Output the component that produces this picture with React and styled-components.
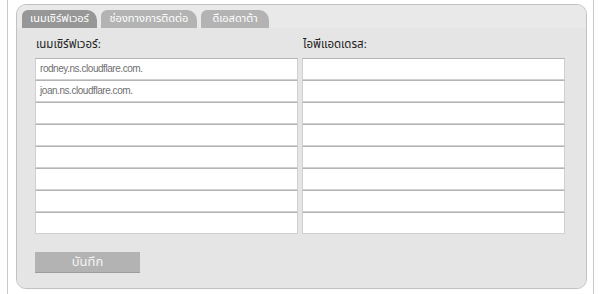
import React from "react";
import styled, { createGlobalStyle } from "styled-components";

const Global = createGlobalStyle`
  html, body { margin: 0; padding: 0; background: #fff; }
  body { font-family: Tahoma, "Noto Sans Thai", "Noto Sans", "DejaVu Sans", sans-serif; }
`;

const Frame = styled.div`
  box-sizing: border-box;
  margin-left: 7px;
  width: 587px;
  height: 294px;
  border-left: 1px solid #c9c9c9;
  border-right: 1px solid #c9c9c9;
  padding: 4px 6px 0 8px;
`;

const Panel = styled.div`
  box-sizing: border-box;
  height: 285px;
  border: 1px solid #c2c2c2;
  border-radius: 10px;
  background: #e6e6e6;
  box-shadow: 0 1px 0 #fafafa, inset 0 0 0 1px #f4f4f4;
  display: flex;
  flex-direction: column;
  overflow: hidden;
`;

const TabBar = styled.div`
  display: flex;
  gap: 4px;
  padding: 5px 0 0 5px;
  background: #e9e9e9;
`;

const Tab = styled.div`
  box-sizing: border-box;
  width: ${(p) => p.$w}px;
  height: 18px;
  border-radius: 6px 10px 0 0;
  background: ${(p) => (p.$active ? "#979797" : "#b3b3b3")};
  color: #fff;
  font-size: 11px;
  line-height: 18px;
  text-align: center;
  white-space: nowrap;
`;

const Content = styled.div`
  flex: 1;
  padding: 9px 0 0 18px;
  background: #e5e5e5;
`;

const Columns = styled.div`
  display: grid;
  grid-template-columns: 263px 263px;
  column-gap: 4px;
`;

const Column = styled.div`
  display: flex;
  flex-direction: column;
`;

const Label = styled.div`
  font-size: 11.5px;
  color: #222;
  height: 21px;
  line-height: 16px;
  padding-left: 1px;
`;

const Field = styled.div`
  box-sizing: border-box;
  height: 22px;
  background: #fff;
  border: 1px solid #d0d0d0;
  border-top-color: #b4b4b4;
  font-family: "Liberation Sans", Arial, sans-serif;
  font-size: 10px;
  letter-spacing: -0.45px;
  color: #707070;
  line-height: 20px;
  padding-left: 4px;
  white-space: nowrap;
`;

const Button = styled.div`
  box-sizing: border-box;
  margin-top: 18px;
  width: 105px;
  height: 21px;
  background: #b3b3b3;
  border-bottom: 1px solid #9c9c9c;
  color: #f4f4f4;
  font-size: 13px;
  line-height: 20px;
  text-align: center;
`;

const servers = ["rodney.ns.cloudflare.com.", "joan.ns.cloudflare.com.", "", "", "", "", "", ""];
const ips = ["", "", "", "", "", "", "", ""];

export default function App() {
  return (
    <>
      <Global />
      <Frame>
        <Panel>
          <TabBar>
            <Tab $w={75} $active>เนมเซิร์ฟเวอร์</Tab>
            <Tab $w={96}>ช่องทางการติดต่อ</Tab>
            <Tab $w={68}>ดีเอสดาต้า</Tab>
          </TabBar>
          <Content>
            <Columns>
              <Column>
                <Label>เนมเซิร์ฟเวอร์:</Label>
                {servers.map((s, i) => (
                  <Field key={i}>{s}</Field>
                ))}
              </Column>
              <Column>
                <Label>ไอพีแอดเดรส:</Label>
                {ips.map((s, i) => (
                  <Field key={i}>{s}</Field>
                ))}
              </Column>
            </Columns>
            <Button>บันทึก</Button>
          </Content>
        </Panel>
      </Frame>
    </>
  );
}
